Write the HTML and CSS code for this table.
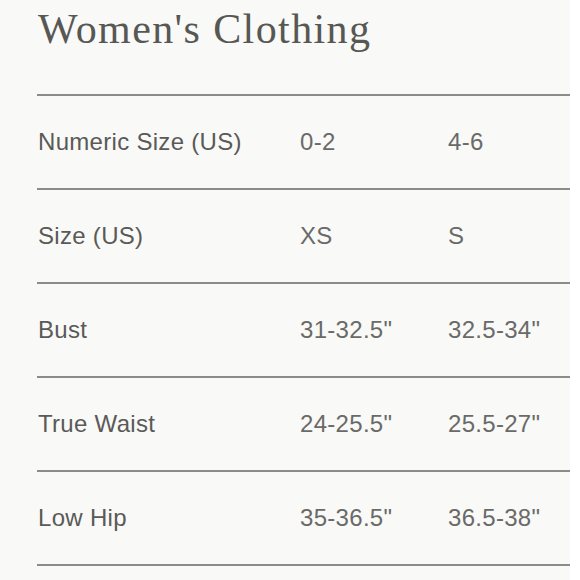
FILE: index.html
```html
<!DOCTYPE html>
<html>
<head>
<meta charset="utf-8">
<link rel="stylesheet" href="styles.css">
</head>
<body>
<div class="page">
  <h1 class="title">Women's Clothing</h1>
  <div class="table">
    <div class="row"><div class="label">Numeric Size (US)</div><div class="cell">0-2</div><div class="cell">4-6</div></div>
    <div class="row"><div class="label">Size (US)</div><div class="cell">XS</div><div class="cell">S</div></div>
    <div class="row"><div class="label">Bust</div><div class="cell">31-32.5"</div><div class="cell">32.5-34"</div></div>
    <div class="row"><div class="label">True Waist</div><div class="cell">24-25.5"</div><div class="cell">25.5-27"</div></div>
    <div class="row"><div class="label">Low Hip</div><div class="cell">35-36.5"</div><div class="cell">36.5-38"</div></div>
  </div>
</div>
</body>
</html>
```

FILE: styles.css
```css
html, body {
  margin: 0;
  padding: 0;
  background: #ffffff;
}
.page {
  width: 570px;
  height: 580px;
  box-sizing: border-box;
  padding-left: 37px;
  background: #f9f9f7;
  overflow: hidden;
}
.title {
  margin: 0;
  height: 96px;
  box-sizing: border-box;
  padding-top: 8px;
  padding-left: 1px;
  font-family: "Liberation Serif", serif;
  font-weight: normal;
  font-size: 42px;
  line-height: 42px;
  letter-spacing: 1.4px;
  color: #575753;
  border-bottom: 2px solid #8b8b88;
}
.row {
  display: grid;
  grid-template-columns: 263px 148px 1fr;
  align-items: center;
  height: 94px;
  box-sizing: border-box;
  border-bottom: 2px solid #8b8b88;
  font-family: "Liberation Sans", sans-serif;
  font-size: 24px;
  letter-spacing: 0.3px;
  color: #5a5a58;
}
.label {
  padding-left: 1px;
}
.cell {
  color: #6a6a68;
}
```
